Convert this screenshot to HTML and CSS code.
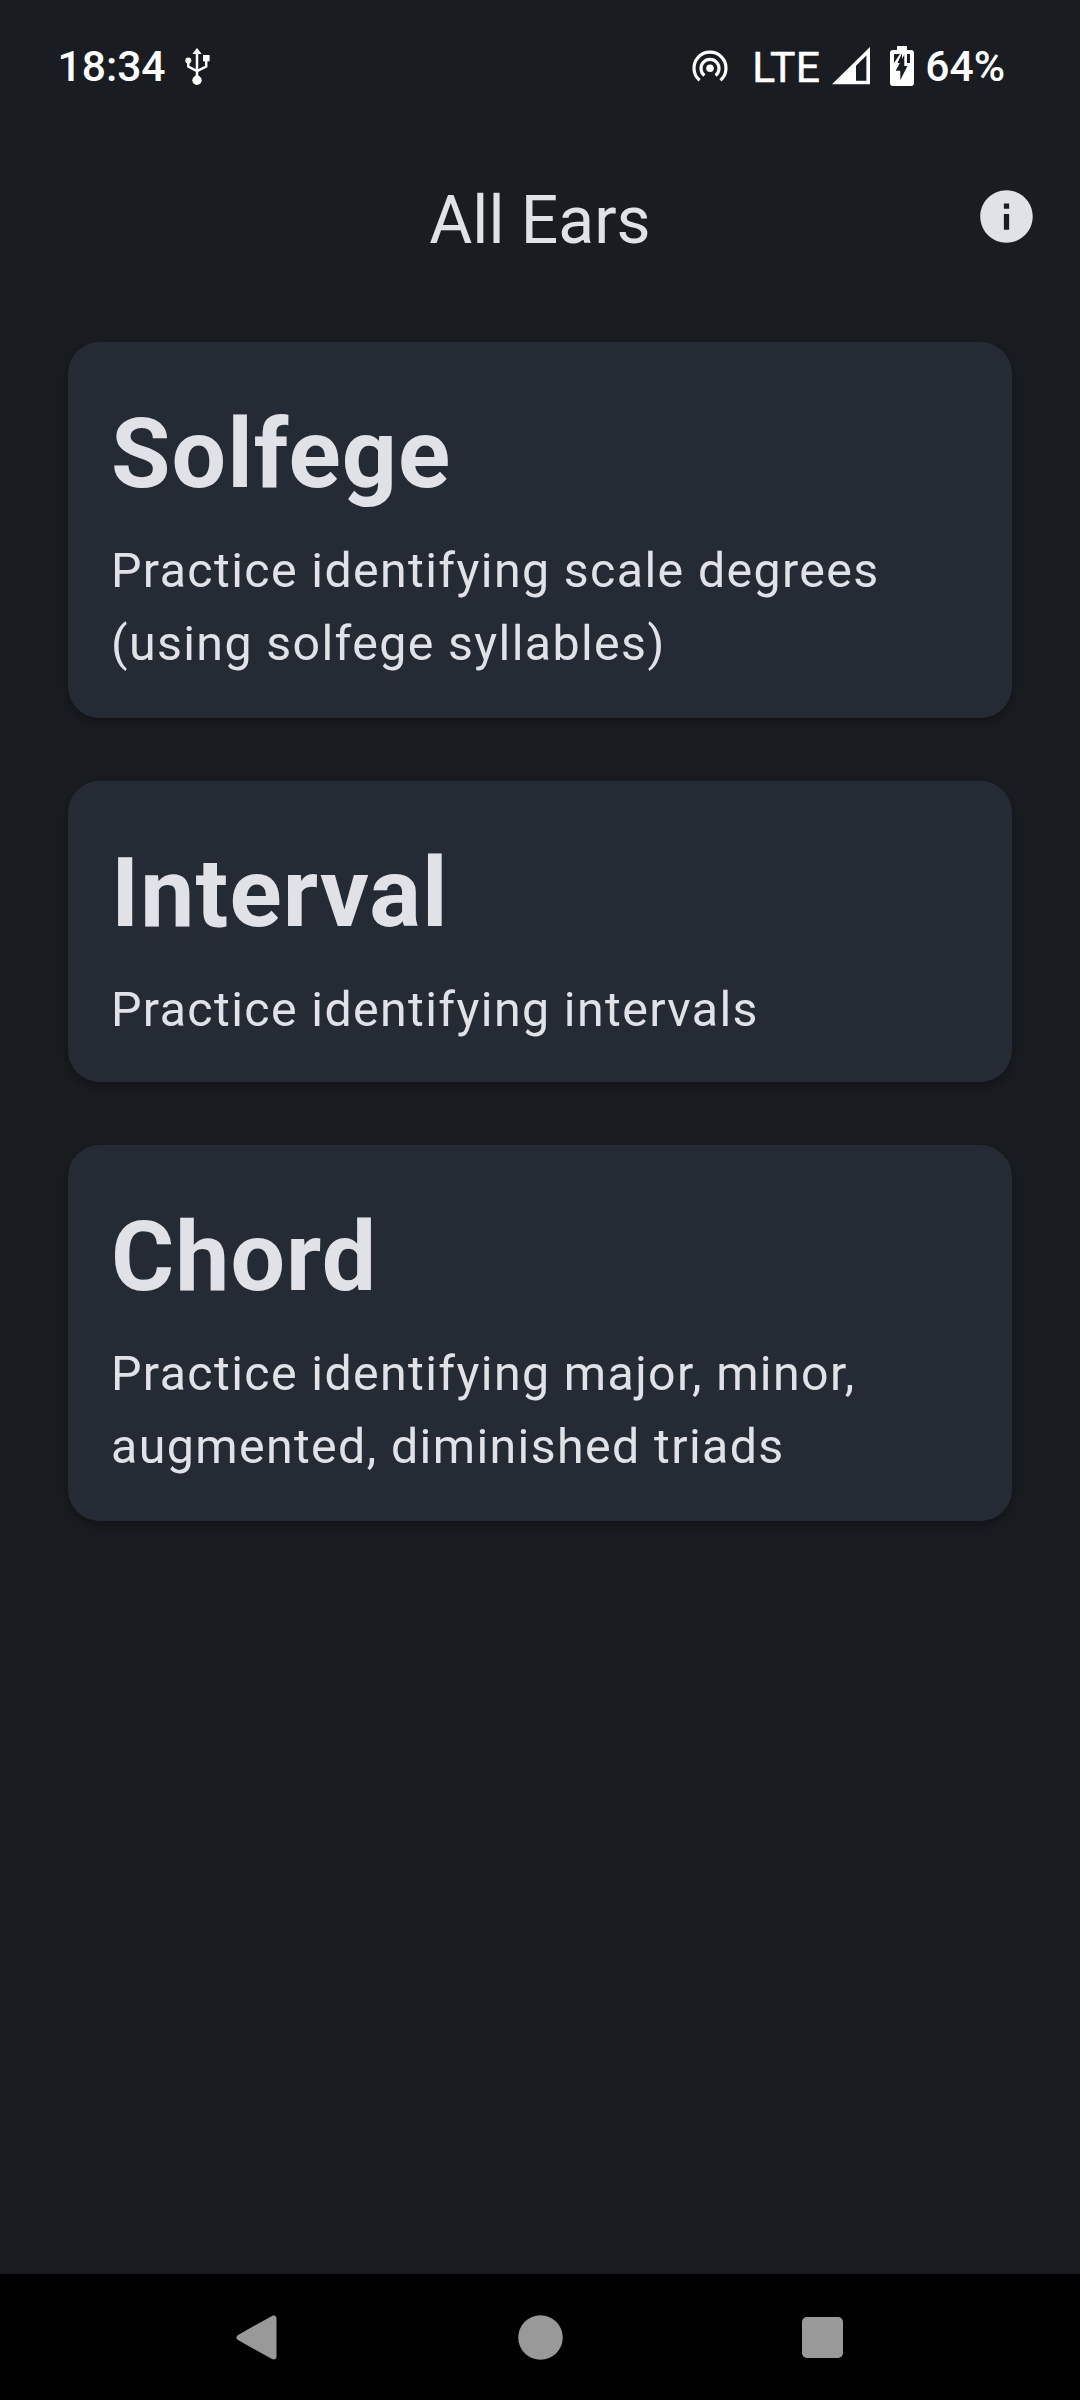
FILE: index.html
```
<!DOCTYPE html>
<html lang="en">
<head>
<meta charset="utf-8">
<title>All Ears</title>
<link rel="stylesheet" href="styles.css">
</head>
<body>
<div class="screen">
  <div class="status-bar">
    <span class="status-text">18:34</span>
    <svg class="usb" width="26" height="38" viewBox="0 0 26 38">
      <path d="M12 5v28M3.3 13v5.5l8.7 4.6 9.2-4.6V11" fill="none" stroke="#fff" stroke-width="2.5"/>
      <path d="M12 0l4.7 6H7.3z" fill="#fff"/>
      <circle cx="3.3" cy="12.5" r="3" fill="#fff"/>
      <rect x="18" y="7" width="6.6" height="6.3" fill="#fff"/>
      <circle cx="12" cy="32.2" r="4.7" fill="#fff"/>
    </svg>
    <span class="spacer"></span>
    <svg class="hotspot" width="36" height="32" viewBox="0 0 36 32">
      <circle cx="18" cy="18.3" r="3.8" fill="#fff"/>
      <path d="M12.4 25.4A9 9 0 1 1 23.6 25.4" fill="none" stroke="#fff" stroke-width="3.2"/>
      <path d="M7.6 30.3A16 16 0 1 1 28.4 30.3" fill="none" stroke="#fff" stroke-width="3.2"/>
    </svg>
    <span class="network">LTE</span>
    <svg class="signal" width="38" height="38" viewBox="0 0 38 38">
      <path fill="#fff" fill-rule="evenodd" d="M0 37.3L38 0v37.3zM24 33.8h10.4V8.5L24 18.7z"/>
    </svg>
    <svg class="battery" width="24" height="40" viewBox="0 0 24 40">
      <path fill="#fff" d="M7 0h10v4h4a3 3 0 0 1 3 3v30a3 3 0 0 1-3 3H3a3 3 0 0 1-3-3V7a3 3 0 0 1 3-3h4z"/>
      <path fill="#191c20" d="M4 8h16v9H4z"/>
      <path fill="#fff" d="M13 5L4 24.5V17l8-12zM12 7h5v13h-5z"/>
      <path fill="#191c20" d="M14.6 8L5.7 24.7h4.6V34l7.2-14h-3.2V8z"/>
    </svg>
    <span class="status-text">64%</span>
  </div>

  <header class="app-bar">
    <span></span>
    <h1 class="title">All Ears</h1>
    <svg class="info" width="63" height="63" viewBox="0 0 24 24">
      <path fill="currentColor" d="M12 2C6.48 2 2 6.48 2 12s4.48 10 10 10 10-4.48 10-10S17.52 2 12 2zm1 15h-2v-6h2v6zm0-8h-2V7h2v2z"/>
    </svg>
  </header>

  <main class="cards">
    <section class="card card-tall">
      <h2 class="card-title">Solfege</h2>
      <p class="card-text">Practice identifying scale degrees<br>(using solfege syllables)</p>
    </section>
    <section class="card">
      <h2 class="card-title">Interval</h2>
      <p class="card-text">Practice identifying intervals</p>
    </section>
    <section class="card card-tall">
      <h2 class="card-title">Chord</h2>
      <p class="card-text">Practice identifying major, minor,<br>augmented, diminished triads</p>
    </section>
  </main>

  <nav class="nav-bar">
    <span class="nav-item"><svg width="45" height="45" viewBox="0 0 45 45"><path d="M4.5 22.5L38.5 3.5v38z" fill="#999" stroke="#999" stroke-width="6" stroke-linejoin="round"/></svg></span>
    <span class="nav-item"><svg width="45" height="45" viewBox="0 0 45 45"><circle cx="22.5" cy="22.5" r="22.3" fill="#999"/></svg></span>
    <span class="nav-item"><svg width="45" height="45" viewBox="0 0 45 45"><rect x="2" y="2" width="41" height="41" rx="5" fill="#999"/></svg></span>
  </nav>
</div>
</body>
</html>
```
FILE: styles.css
```
* { box-sizing: border-box; }

body {
  margin: 0;
  background: #191c20;
  color: #e1e2e8;
  font-family: Roboto, sans-serif;
}

h1, h2, p { margin: 0; }
svg { display: block; flex: none; }

.screen {
  display: flex;
  flex-direction: column;
  width: 1080px;
  height: 2400px;
}

.status-bar {
  display: flex;
  align-items: center;
  height: 132px;
  padding: 0 75px 0 57.5px;
  color: #fff;
}

.status-text {
  font-size: 42.6px;
  font-weight: 500;
  line-height: 48px;
}

.usb { margin: 2px 0 0 19px; }
.spacer { flex: 1; }
.hotspot { margin-right: 24px; }

.network {
  width: 80px;
  padding-top: 1px;
  font-size: 42.6px;
  font-weight: 400;
  line-height: 48px;
  letter-spacing: 0.5px;
  -webkit-text-stroke: 0.5px #fff;
}

.signal { margin-right: 19.5px; }
.battery { margin-right: 11.5px; }

.app-bar {
  display: grid;
  grid-template-columns: 1fr auto 1fr;
  align-items: center;
  height: 174px;
  padding: 0 42px;
}

.title {
  padding-top: 3px;
  font-size: 66px;
  font-weight: 400;
  line-height: 80px;
}

.info {
  justify-self: end;
  margin-bottom: 5px;
}

.cards {
  display: flex;
  flex: 1;
  flex-direction: column;
  gap: 63px;
  padding: 36px 68px 0;
}

.card {
  height: 301px;
  padding: 52px 42px 0 43px;
  border-radius: 31.5px;
  background: #252b34;
  box-shadow: 0 4px 12px rgba(0, 0, 0, 0.3);
}

.card-tall { height: 376px; }

.card-title {
  font-size: 96.6px;
  font-weight: 700;
  line-height: 121px;
  letter-spacing: 1.1px;
}

.card-text {
  margin-top: 19px;
  font-size: 48.3px;
  line-height: 73px;
  letter-spacing: 1.38px;
}

.nav-bar {
  display: flex;
  align-items: center;
  justify-content: center;
  height: 126px;
  padding-top: 1px;
  background: #000;
}

.nav-item {
  display: flex;
  justify-content: center;
  width: 282.5px;
}
```
